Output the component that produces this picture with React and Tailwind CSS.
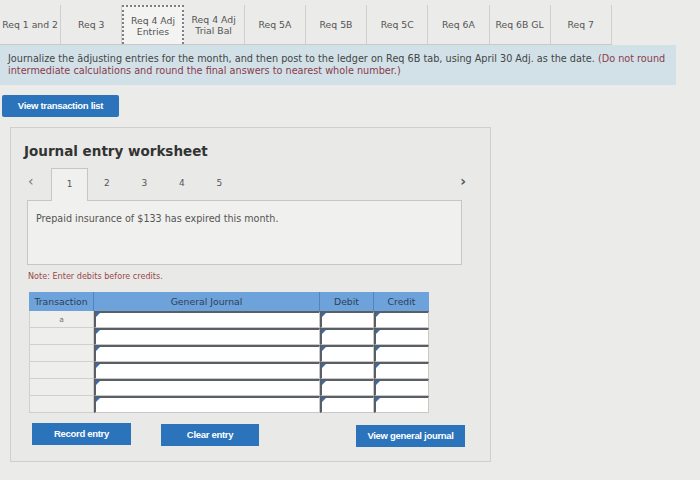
import React from 'react';

const tabs = [
  { label: ['Req 1 and 2'] },
  { label: ['Req 3'] },
  { label: ['Req 4 Adj', 'Entries'], active: true },
  { label: ['Req 4 Adj', 'Trial Bal'] },
  { label: ['Req 5A'] },
  { label: ['Req 5B'] },
  { label: ['Req 5C'] },
  { label: ['Req 6A'] },
  { label: ['Req 6B GL'] },
  { label: ['Req 7'] },
];

function Corner() {
  return (
    <span className="absolute left-0 top-0 w-0 h-0 border-t-[4px] border-r-[4px] border-t-[#2f6fb8] border-r-transparent" />
  );
}

function Cell() {
  return (
    <div className="relative h-full bg-white border-t-2 border-l-2 border-[#5a5f66] border-r border-b border-r-[#c8c8c8] border-b-[#c8c8c8]">
      <Corner />
    </div>
  );
}

export default function App() {
  const rows = ['a', '', '', '', '', ''];

  return (
    <div className="w-[700px] h-[480px] bg-[#ebebe9] overflow-hidden text-[#3a3a3a]" style={{ fontFamily: '"DejaVu Sans", Verdana, sans-serif' }}>
      {/* Requirement tabs */}
      <div className="flex items-end h-[45px] pt-[6px] border-b border-[#c9c9c9] w-[612px]">
        {tabs.map((t, i) => (
          <div
            key={i}
            className={`w-[61.2px] h-[39px] flex flex-col items-center justify-center text-[9.3px] leading-[11px] text-[#555] ${
              t.active ? 'bg-[#f3f3f1] border-2 border-dotted border-[#7a7f88] border-b-0' : 'border-r border-[#cfcfcd]'
            }`}
          >
            {t.label.map((l, j) => (
              <span key={j} className="whitespace-nowrap">{l}</span>
            ))}
          </div>
        ))}
      </div>

      {/* Instructions */}
      <p className="w-[676px] h-[40px] bg-[#d2e1e7] pl-[8px] pr-[2px] pt-[8px] text-[9.7px] leading-[12px] text-[#444]">
        Journalize the ădjusting entries for the month, and then post to the ledger on Req 6B tab, using April 30 Adj. as the date.{' '}
        <span className="text-[#8a3b4c]">(Do not round intermediate calculations and round the final answers to nearest whole number.)</span>
      </p>

      <div className="flex pt-[10px] pl-[2px]">
        <button className="block w-[117px] h-[22px] bg-[#2b73bb] rounded-[2px] text-white text-[9.5px] font-bold tracking-[-0.3px]" style={{ fontFamily: '"Liberation Sans", Arial, sans-serif' }}>
          View transaction list
        </button>
      </div>

      {/* Worksheet */}
      <div className="ml-[10px] mt-[10px] w-[481px] h-[335px] border border-[#cfcfcd] bg-[#e9e9e7] pl-[13px] pt-[14px]">
        <div className="text-[13.5px] font-bold text-[#333] leading-[18px]">Journal entry worksheet</div>

        <div className="flex items-end h-[33px] mt-[7px] w-[438px] relative">
          <span className="absolute left-[4px] top-[4px] text-[14px] text-[#777]">&lsaquo;</span>
          <div className="ml-[27px] flex items-end">
            <div className="w-[37px] h-[33px] bg-[#f0f0ee] border border-b-0 border-[#c6c6c4] flex items-center justify-center text-[9px] text-[#555] relative top-[1px]">1</div>
            {[2, 3, 4, 5].map(n => (
              <div key={n} className="w-[37.5px] h-[33px] flex items-center justify-center text-[9px] text-[#555]">{n}</div>
            ))}
          </div>
          <span className="absolute right-[-4px] top-[4px] text-[14px] font-bold text-[#555]">&rsaquo;</span>
        </div>

        <div className="ml-[3px] w-[435px] h-[65px] border border-[#c6c6c4] bg-[#f0f0ee] pl-[8px] pt-[11px] text-[9.6px] text-[#555]">
          Prepaid insurance of $133 has expired this month.
        </div>

        <div className="ml-[4px] mt-[5px] text-[8.1px] text-[#9a4848]">Note: Enter debits before credits.</div>

        {/* Journal table */}
        <div className="ml-[5px] mt-[10px] w-[400px]">
          <div className="grid grid-cols-[65px_226px_54px_55px] h-[19px] bg-[#6ea2da] text-[9.3px] text-[#2d3f57]">
            <div className="flex items-center justify-center border-r border-[#4e86c4]">Transaction</div>
            <div className="flex items-center justify-center border-r border-[#4e86c4]">General Journal</div>
            <div className="flex items-center justify-center border-r border-[#4e86c4]">Debit</div>
            <div className="flex items-center justify-center">Credit</div>
          </div>
          {rows.map((r, i) => (
            <div key={i} className="grid grid-cols-[65px_226px_54px_55px] h-[17px]">
              <div className="bg-[#eeeeec] border-b border-r border-l border-[#cfcfcd] flex items-center justify-center text-[7.5px] text-[#777]">{r}</div>
              <Cell />
              <Cell />
              <Cell />
            </div>
          ))}
        </div>

        <div className="flex items-start mt-[10px] text-white text-[9.5px] font-bold tracking-[-0.3px]" style={{ fontFamily: '"Liberation Sans", Arial, sans-serif' }}>
          <button className="block ml-[8px] w-[99px] h-[22px] bg-[#2b73bb]">Record entry</button>
          <button className="block ml-[30px] mt-[1px] w-[98px] h-[22px] bg-[#2b73bb]">Clear entry</button>
          <button className="block ml-[97px] mt-[2px] w-[109px] h-[22px] bg-[#2b73bb]">View general journal</button>
        </div>
      </div>
    </div>
  );
}
